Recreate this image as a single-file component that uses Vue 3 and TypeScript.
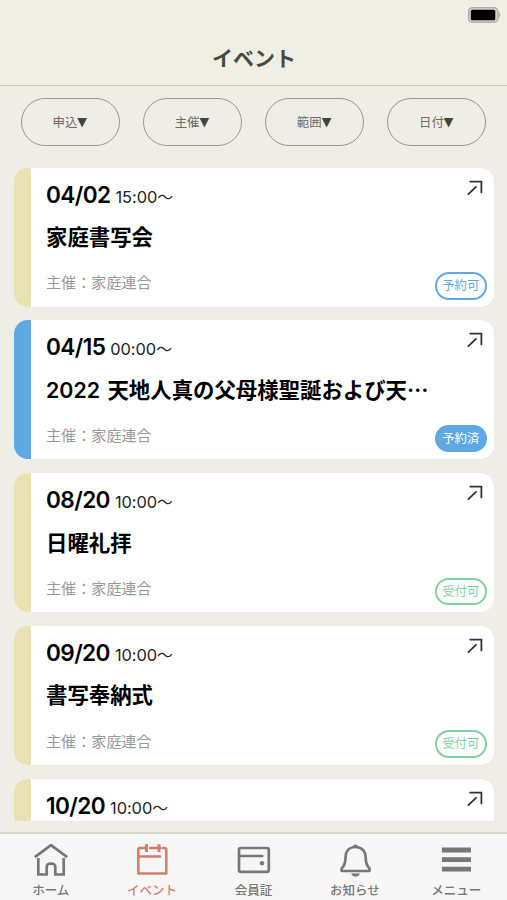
<script setup lang="ts">
interface EventItem {
  date: string
  time: string
  title?: string
  truncated?: boolean
  host?: string
  status?: string
  kind: 'bookable' | 'booked' | 'open'
}

const filters: string[] = ['申込', '主催', '範囲', '日付']

const events: EventItem[] = [
  { date: '04/02', time: '15:00', title: '家庭書写会', host: '家庭連合', status: '予約可', kind: 'bookable' },
  { date: '04/15', time: '00:00', title: '2022 天地人真の父母様聖誕および天', truncated: true, host: '家庭連合', status: '予約済', kind: 'booked' },
  { date: '08/20', time: '10:00', title: '日曜礼拝', host: '家庭連合', status: '受付可', kind: 'open' },
  { date: '09/20', time: '10:00', title: '書写奉納式', host: '家庭連合', status: '受付可', kind: 'open' },
  { date: '10/20', time: '10:00', kind: 'open' },
]

const tabs = [
  { id: 'home', label: 'ホーム' },
  { id: 'event', label: 'イベント' },
  { id: 'card', label: '会員証' },
  { id: 'bell', label: 'お知らせ' },
  { id: 'menu', label: 'メニュー' },
]
const current = 'event'
</script>

<template>
  <div class="screen" lang="ja">
    <header class="header">
      <div class="status">
        <svg class="battery" width="34" height="18" viewBox="0 0 34 18">
          <rect x="1.6" y="1.6" width="29.4" height="14.6" rx="4" fill="#d4d3cb" stroke="#acaca5" stroke-width="1.3" />
          <rect x="3.8" y="3.7" width="24.5" height="10.6" rx="1.5" fill="#000" />
          <path d="M32.3 6.6Q33.9 8.9 32.3 11.2Z" fill="#acaca5" stroke="#acaca5" stroke-width=".6" />
        </svg>
      </div>
      <h1 class="heading">イベント</h1>
    </header>

    <div class="filters">
      <button v-for="f in filters" :key="f" class="filter" type="button">{{ f }}<span class="caret">▼</span></button>
    </div>

    <main class="list">
      <article v-for="e in events" :key="e.date" class="card" :class="e.kind">
        <div class="info">
          <p class="when"><span class="date">{{ e.date }}</span><span class="time">{{ e.time }}<span class="tilde">〜</span></span></p>
          <h2 v-if="e.title" class="title">{{ e.title }}<span v-if="e.truncated" class="more">…</span></h2>
          <p v-if="e.host" class="host">主催：{{ e.host }}</p>
        </div>
        <div class="side">
          <svg class="arrow" width="16" height="16" viewBox="0 0 16 16" fill="none" stroke="#333" stroke-width="1.8" stroke-linecap="round">
            <path d="M3.2 1.6H14.4V12.4M1.4 14.2L9 6.8" stroke-linejoin="miter" />
          </svg>
          <span v-if="e.status" class="badge">{{ e.status }}</span>
        </div>
      </article>
    </main>

    <nav class="tabs">
      <a v-for="t in tabs" :key="t.id" class="tab" :class="{ active: t.id === current }">
        <svg class="icon" width="36" height="36" viewBox="0 0 36 36" fill="none" stroke="currentColor" stroke-width="2.7" stroke-linecap="round" stroke-linejoin="round">
          <template v-if="t.id === 'home'">
            <path d="M1.8 15.2L18 3.2L34.2 15.2" stroke-linecap="butt" />
            <path d="M5.3 16V32.5H13.7V25.2Q13.7 21.5 18 21.5Q22.3 21.5 22.3 25.2V32.5H30.7V16" stroke-linecap="butt" stroke-linejoin="miter" />
          </template>
          <template v-else-if="t.id === 'event'">
            <path d="M8.3 6H5.6Q4.3 6 4.3 7.8V31.4H32.3V7.8Q32.3 6 30.5 6H28.6M16 6H23M4.3 14.6H26" stroke-width="2.5" />
            <path d="M12.5 2.2V10M25 2.2V10M9.3 6H12M25 6H27" stroke-width="3" stroke-linecap="butt" />
          </template>
          <template v-else-if="t.id === 'card'">
            <rect x="4" y="6" width="29.8" height="23.8" rx="1.8" />
            <path d="M4.5 14H27.3" />
            <circle cx="27" cy="21.3" r="2.2" fill="currentColor" stroke="none" />
          </template>
          <template v-else-if="t.id === 'bell'">
            <path d="M18.5 5C11.5 5 8.5 10 8.5 15.5C8.5 21 7.7 23.8 4.7 26.2V29H32.5V26.2C29.5 23.8 28.7 21 28.7 15.5C28.7 10 25.5 5 18.5 5Z" />
            <path d="M15.7 4.7Q18.5 .8 21.3 4.7Z" fill="currentColor" stroke-width="1" />
            <path d="M14.2 31.4H23Q22 34.5 18.6 34.5T14.2 31.4Z" fill="currentColor" stroke="none" />
          </template>
          <template v-else>
            <path d="M3.9 8H33M3.9 17.6H33M3.9 27.2H33" stroke-width="4.8" stroke-linecap="butt" />
          </template>
        </svg>
        <span class="label">{{ t.label }}</span>
      </a>
    </nav>
  </div>
</template>

<style>
body {
  margin: 0;
  overflow: hidden;
}
</style>

<style scoped>
.screen {
  box-sizing: border-box;
  width: 507px;
  height: 900px;
  display: flex;
  flex-direction: column;
  overflow: hidden;
  background: #efeee6;
  font-family: Inter, "Noto Sans CJK JP", sans-serif;
}
.header {
  box-sizing: border-box;
  height: 86px;
  flex: none;
  border-bottom: 1.4px solid #c9c9bf;
  background: #f0efe4;
}
.status {
  display: flex;
  justify-content: flex-end;
  height: 36px;
  padding: 6px 6px 0 0;
  box-sizing: border-box;
}
.heading {
  margin: 0;
  padding-left: 1px;
  font-size: 21px;
  line-height: 46px;
  font-weight: 700;
  text-align: center;
  color: #4a4a45;
}
.filters {
  flex: none;
  display: flex;
  justify-content: space-between;
  padding: 12px 20.5px 0 21px;
  height: 49px;
}
.filter {
  box-sizing: border-box;
  width: 99px;
  height: 48px;
  padding: 0 1.5px 0 0;
  border: 1.4px solid #999991;
  border-radius: 25px;
  background: transparent;
  font: 400 12.4px/20px "Noto Sans CJK JP", sans-serif;
  color: #6b6b65;
}
.caret {
  display: inline-block;
  font-family: "DejaVu Sans", sans-serif;
  font-size: 12.5px;
  line-height: 1;
  color: #454540;
  transform: translateY(-1px);
}
.list {
  flex: none;
  margin-top: 20.5px;
  height: 653px;
  padding: 0 13px 0 14px;
  overflow: hidden;
  display: flex;
  flex-direction: column;
  gap: 13.8px;
}
.card {
  --tone: #5ea9e3;
  --strip: #e9e2b2;
  box-sizing: border-box;
  flex: none;
  height: 139px;
  border-radius: 14px;
  display: flex;
  justify-content: space-between;
  background: linear-gradient(to right, var(--strip) 16.7px, #fff 16.7px);
  padding: 12px 7px 7px 32px;
}
.card.booked {
  --strip: #5ea9e3;
}
.card.open {
  --tone: #83cfa2;
}
.when,
.title,
.host {
  margin: 0;
  white-space: nowrap;
}
.when {
  display: flex;
  align-items: baseline;
  gap: 5px;
  height: 30px;
  line-height: 30px;
  color: #000;
}
.date {
  font-size: 22.6px;
  font-weight: 600;
  letter-spacing: -0.6px;
}
.time {
  font-size: 16.4px;
  letter-spacing: -0.05px;
  color: #222;
}
.tilde {
  display: inline-block;
  font-size: 15.8px;
  line-height: 1;
}
.title {
  margin-top: 12.5px;
  font-size: 21.4px;
  line-height: 30px;
  font-weight: 600;
  word-spacing: 2px;
  color: #000;
}
.more {
  font-family: "Noto Sans CJK JP", sans-serif;
  line-height: 1;
}
.host {
  margin-top: 20.2px;
  font-size: 15.1px;
  line-height: 22px;
  color: #999;
}
.side {
  display: flex;
  flex-direction: column;
  justify-content: space-between;
  align-items: flex-end;
}
.arrow {
  margin-right: 4.5px;
}
.badge {
  box-sizing: border-box;
  width: 52.5px;
  height: 27.5px;
  border: 2px solid var(--tone);
  border-radius: 14px;
  font-size: 12.4px;
  line-height: 23.5px;
  text-align: center;
  color: var(--tone);
}
.booked .badge {
  background: var(--tone);
  color: #fff;
}
.tabs {
  box-sizing: border-box;
  flex: none;
  margin-top: 11.5px;
  height: 68px;
  border-top: 2px solid #d6d6cb;
  background: #f6f6f6;
  display: grid;
  grid-template-columns: repeat(5, 101.4px);
  padding-top: 8px;
}
.tab {
  display: flex;
  flex-direction: column;
  align-items: center;
  color: #777;
}
.tab.active {
  color: #d27e6b;
}
.icon {
  flex: none;
}
.label {
  font-size: 12.5px;
  line-height: 18px;
  font-weight: 500;
  margin-top: 4px;
}
</style>
